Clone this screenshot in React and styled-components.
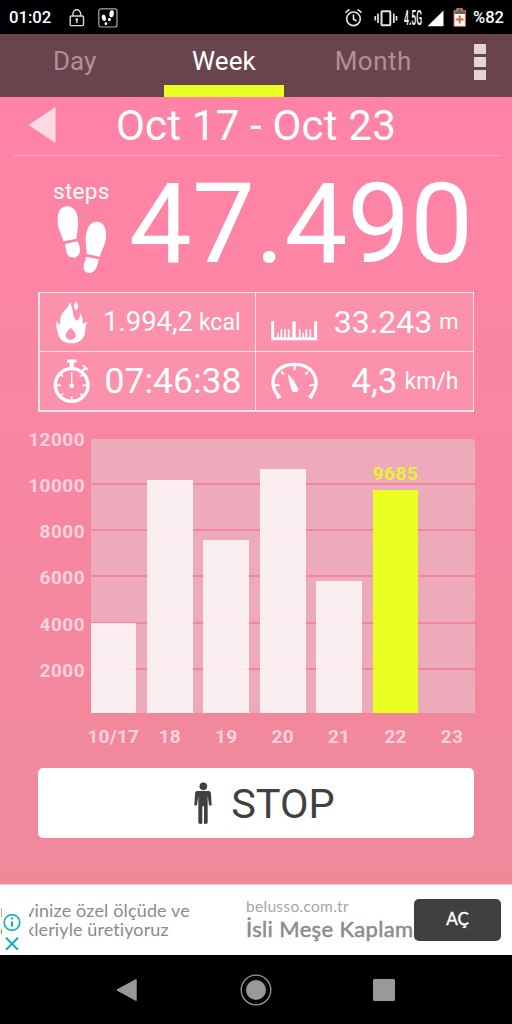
import React from 'react';
import styled, { createGlobalStyle } from 'styled-components';

const GlobalStyle = createGlobalStyle`
  html,
  body {
    margin: 0;
    padding: 0;
  }
  svg {
    display: block;
    flex-shrink: 0;
  }
`;

const Screen = styled.div`
  width: 512px;
  height: 1024px;
  overflow: hidden;
  display: flex;
  flex-direction: column;
  font-family: Roboto, sans-serif;
  color: #fff;
  white-space: nowrap;
`;

const Text = styled.span`
  font-size: ${(p) => p.$size}px;
  font-weight: ${(p) => p.$weight || 400};
  letter-spacing: ${(p) => p.$spacing || 0}px;
  line-height: 1;
`;

const StatusBar = styled.div`
  height: 34px;
  box-sizing: border-box;
  padding: 2px 8px 0 9px;
  background: #000;
  display: flex;
  align-items: center;
  justify-content: space-between;
`;

const StatusGroup = styled.div`
  display: flex;
  align-items: center;
`;

const NoticeIcons = styled.div`
  display: flex;
  align-items: center;
  gap: 13px;
`;

const Clock = styled(Text)`
  width: 60px;
`;

const TabBar = styled.div`
  height: 63px;
  background: #6a444c;
  display: flex;
`;

const Tab = styled.div`
  width: 149.3px;
  box-sizing: border-box;
  padding: 0 15px;
  text-align: center;
  color: ${(p) => (p.$active ? '#fff' : '#ab9298')};
  font-size: 26px;
  line-height: 55px;
  letter-spacing: ${(p) => p.$spacing || 0}px;
`;

const TabMarker = styled.div`
  height: 12px;
  margin-top: -4px;
  background: #e8ff21;
`;

const MenuButton = styled.div`
  flex: 1;
  padding-top: 10px;
  display: flex;
  flex-direction: column;
  align-items: center;
  gap: 3px;
`;

const MenuDot = styled.div`
  width: 11.5px;
  height: 10px;
  background: #e1d5d8;
`;

const Content = styled.div`
  height: 788px;
  box-sizing: border-box;
  background: linear-gradient(#ff83a7, #ef899a);
`;

const DateRow = styled.div`
  height: 59px;
  box-sizing: border-box;
  margin: 0 12px 0 13px;
  padding-left: 15px;
  border-bottom: 1px solid #ffabc4;
  display: flex;
  align-items: center;

  svg {
    margin-bottom: 2px;
  }
`;

const DateText = styled(Text)`
  margin-left: 60px;
`;

const Hero = styled.div`
  height: 136px;
  display: flex;
  align-items: center;
  padding-left: 53px;
`;

const StepsLabel = styled.div`
  width: 76px;
  height: 90px;
  padding-top: 3px;
  display: flex;
  flex-direction: column;
  gap: 2px;

  svg {
    margin-left: 3px;
  }
`;

const Stats = styled.div`
  width: 436px;
  height: 120px;
  box-sizing: border-box;
  margin-left: 38px;
  padding: 1.5px;
  background: #ffe4ea;
  display: grid;
  grid-template-columns: 215px 1fr;
  grid-template-rows: 57.5px 1fr;
  gap: 1.5px;
`;

const Stat = styled.div`
  background: #fc91ac;
  padding: ${(p) => p.$padding};
  display: flex;
  align-items: center;
  justify-content: space-between;
`;

const Amount = styled.div`
  display: flex;
  align-items: center;
  gap: ${(p) => p.$gap || 7}px;
`;

const Chart = styled.div`
  margin-top: 5px;
  height: 351px;
  display: grid;
  grid-template-columns: 85px 384.5px;
  grid-template-rows: 297px 54px;
  column-gap: 5.5px;
`;

const ScaleLabels = styled.div`
  text-align: right;
  font-size: 19px;
  font-weight: 700;
  letter-spacing: 0.45px;
  line-height: 46.15px;
  color: #ffd2dd;
`;

const Plot = styled.div`
  margin-top: 22px;
  height: 274.5px;
  display: grid;
  border-radius: 3px 3px 0 0;
  overflow: hidden;
`;

const GridLines = styled.div`
  grid-area: 1 / 1;
`;

const GridBand = styled.div`
  height: 46.15px;
  box-sizing: border-box;
  background: #edaaba;
  border-bottom: 2px solid #f5849f;
`;

const Bars = styled.div`
  grid-area: 1 / 1;
  height: 274.5px;
  display: grid;
  grid-template-columns: repeat(7, 45.7px);
  column-gap: 10.75px;
  align-items: end;
`;

const Bar = styled.div`
  background: ${(p) => (p.$active ? '#e8ff21' : 'rgba(252, 241, 242, 0.95)')};
`;

const BarValue = styled.div`
  text-align: center;
  font-size: 19px;
  font-weight: 700;
  letter-spacing: 0.5px;
  line-height: 33px;
  color: #e9f32f;
`;

const DayLabels = styled.div`
  grid-column: 2;
  display: grid;
  grid-template-columns: repeat(7, 45.7px);
  column-gap: 10.75px;
  font-size: 19px;
  font-weight: 700;
  letter-spacing: 0.2px;
  line-height: 45px;
  color: #ffd2dd;
`;

const DayLabel = styled.div`
  display: flex;
  justify-content: center;
`;

const StopButton = styled.div`
  width: 436px;
  height: 70px;
  margin: 0 0 0 38px;
  border-radius: 5px;
  background: #fff;
  color: #404040;
  display: flex;
  align-items: center;
  justify-content: center;
  gap: 19px;
  box-sizing: border-box;
  padding: 2px 0 0 17px;
`;

const Ad = styled.div`
  height: 71px;
  box-sizing: border-box;
  border-top: 1px solid #ddd3d5;
  background: #fff;
  font-family: Lato, sans-serif;
  color: #8b8b8b;
  display: flex;
`;

const AdEdge = styled.div`
  width: 2px;
  overflow: hidden;
  padding-top: 16px;
  font-size: 18px;
  line-height: 19px;
`;

const AdControls = styled.div`
  width: 27px;
  padding-top: 28px;
  box-sizing: border-box;
`;

const AdText = styled.div`
  width: 217px;
  overflow: hidden;
  padding-top: 16px;
  font-size: 18px;
  line-height: 19px;
`;

const AdLine = styled.div`
  margin-left: -4px;
  letter-spacing: ${(p) => p.$spacing}px;
`;

const AdOffer = styled.div`
  width: 168px;
  padding-top: 12px;
  overflow: hidden;
`;

const AdDomain = styled.div`
  font-size: 15.5px;
  line-height: 18px;
  letter-spacing: 0.3px;
  color: #a5a5a5;
`;

const AdTitle = styled.div`
  font-size: 22px;
  font-weight: 400;
  letter-spacing: 0.35px;
  line-height: 28px;
  -webkit-text-stroke: 0.5px #8b8b8b;
`;

const AdAction = styled.div`
  width: 87px;
  height: 42px;
  margin-top: 14px;
  border-radius: 5px;
  background: #404040;
  color: #fff;
  font-size: 17px;
  font-weight: 400;
  -webkit-text-stroke: 0.4px #fff;
  line-height: 40px;
  text-align: center;
`;

const NavBar = styled.div`
  height: 69px;
  background: #000;
  display: grid;
  grid-template-columns: repeat(3, 128px);
  justify-content: center;
  align-items: center;
  justify-items: center;
`;

const LockIcon = () => (
  <svg width="16" height="18" viewBox="0 0 16 18" fill="none" stroke="#d8d8d8" strokeWidth="1.4">
    <rect x="1.2" y="7" width="13.3" height="9.6" rx="1" />
    <path d="M4 7V4.6a3.8 3.8 0 0 1 7.6 0V7M7.8 10.4v3.6" />
    <circle cx="7.8" cy="10.6" r=".7" />
  </svg>
);

const StepsAppIcon = () => (
  <svg width="20" height="20" viewBox="0 0 20 20">
    <rect x=".8" y=".8" width="18.2" height="18.2" rx="2" fill="none" stroke="#aaa" strokeWidth="1.2" />
    <g fill="#fff">
      <ellipse cx="5.8" cy="9.8" rx="2" ry="3.2" transform="rotate(-10 5.8 9.8)" />
      <ellipse cx="7.9" cy="15.6" rx="1.4" ry="1.7" />
      <ellipse cx="13.6" cy="5.8" rx="2.2" ry="3.5" transform="rotate(8 13.6 5.8)" />
      <ellipse cx="11.4" cy="11.5" rx="1.5" ry="1.8" />
    </g>
  </svg>
);

const StatusIcons = () => (
  <svg width="129" height="22" viewBox="0 0 129 22">
    <g fill="none" stroke="#e4e4e4" strokeWidth="1.6">
      <circle cx="9.5" cy="11.8" r="6.8" />
      <path d="M9.5 7.5v4.7l3 1.8M1.5 5.6l3.8-3.2M17.5 5.6l-3.8-3.2" />
      <rect x="37.5" y="4.3" width="8.8" height="14" rx=".8" strokeWidth="2" />
      <path d="M34 6.5v9.5M49.8 6.5v9.5M31.3 9v4.6M52.5 9v4.6" strokeWidth="1.7" />
    </g>
    <text
      x="60"
      y="18.3"
      fill="#fff"
      fontFamily="Roboto, sans-serif"
      fontSize="20"
      fontWeight="500"
      textLength="18"
      lengthAdjust="spacingAndGlyphs"
    >
      4.5G
    </text>
    <path d="M99.5 3.4v15.8H83.5z" fill="#fff" />
    <path d="M110 3.6h2.8V1.5h5.4v2.1h3.2v15.7H110z" fill="#fff" stroke="#e0623c" />
    <path d="M110.5 4h3V2h4v2h3.5v3h-10.5z" fill="#626262" />
    <path d="M115.7 8.5v8M111.7 12.5h8" stroke="#e0623c" strokeWidth="2" />
  </svg>
);

const FootprintsIcon = () => (
  <svg width="52" height="70" viewBox="168 330 156 210" fill="#fff">
    <path d="M198 334c24-3 36 20 36 46 1 20-5 36-4 51l-40 8c-3-19-17-34-17-62 0-25 7-41 25-43z" />
    <path d="M195 447l38-8c8 18 11 38-3 46-12 6-27 2-30-12z" />
    <path d="M290 380c22 0 29 21 28 45-1 27-15 41-18 60l-40-8c1-16-4-29-3-47 1-28 13-50 33-50z" />
    <path d="M258 485l38 8c-3 18-8 36-22 40-13 3-24-4-23-18 0-12 6-16 7-30z" />
  </svg>
);

const FlameIcon = () => (
  <svg width="32" height="44" viewBox="78 47 96 132">
    <path
      d="M120 54c-4 15-20 26-27 41-5 12-1 19-3 27-5-3-7-8-8-14-6 12-2 24 1 36 4 21 18 33 39 33 23 0 40-11 43-32 2-12-1-21 8-31-6 0-11 2-15 6 2-14-2-25-8-34 0 12-2 20-9 23-8-3-10-13-12-22-1-12-4-21-9-33zM137 49c0 8-7 12-5 20 1 5 6 6 7 10 8-11 5-22-2-30z"
      fill="#fff"
    />
    <path d="M122 130c8 8 17 15 15 26-3 13-24 14-29 2-5-9 5-17 14-28z" fill="#fc91ac" />
  </svg>
);

const StopwatchIcon = () => (
  <svg width="37" height="44" viewBox="67 223 111 132" fill="none" stroke="#fff">
    <circle cx="123" cy="301" r="49" strokeWidth="10" />
    <path d="M109 229h28" strokeWidth="9" />
    <path d="M123 228v22" strokeWidth="13" />
    <path d="M156 259l9-10" strokeWidth="7" />
    <path d="M157 242l14 13" strokeWidth="6" />
    <path d="M123 262v40" strokeWidth="4" />
    <path
      d="M77 302h14M155 302h14M123 334v14M91 270l6 6M155 270l-6 6M91 333l6-6M155 333l-6-6"
      strokeWidth="5"
    />
    <circle cx="123" cy="303" r="7" fill="#fff" stroke="none" />
  </svg>
);

const RulerIcon = () => (
  <svg width="47" height="38" viewBox="64 56 141 114" fill="none" stroke="#fff">
    <path d="M69 111v52h129v-52" strokeWidth="9" />
    <path d="M133 111v52" strokeWidth="10" />
    <path d="M85 145v20M95 135v30M106 135v30M117 135v30M150 135v30M160 145v20M170 135v30M182 135v30" strokeWidth="5" />
  </svg>
);

const GaugeIcon = () => (
  <svg width="48" height="38" viewBox="63 232 144 114" fill="none" stroke="#fff">
    <path d="M87 336C48 290 77 239 134 239s84 54 47 97" strokeWidth="10" />
    <path d="M92 334l-11 6M176 334l11 6" strokeWidth="8" />
    <path d="M73 302h16M177 302h18M134 242v15M94 261l8 9M174 261l-8 9" strokeWidth="6" />
    <path d="M114 269c15 14 23 28 31 44 3 9-15 14-20 4-5-16-10-32-11-48z" fill="#fff" stroke="none" />
  </svg>
);

const PersonIcon = () => (
  <svg width="18" height="43" viewBox="134 79 54 129" fill="#404040">
    <circle cx="162" cy="92" r="11.5" />
    <path d="M144 106h34q7 0 7 9l2 33q-5 4-8 0l-4-27v80q-4 7-11 2v-51h-5v51q-7 5-12-2v-80l-4 27q-4 4-8 0l2-33q0-9 7-9z" />
  </svg>
);

const days = [
  { label: '10/17', height: 90 },
  { label: '18', height: 233 },
  { label: '19', height: 173 },
  { label: '20', height: 244.5 },
  { label: '21', height: 132 },
  { label: '22', height: 223.5, value: 9685 },
  { label: '23', height: 0 },
];

const scale = [12000, 10000, 8000, 6000, 4000, 2000];

function WeekChart() {
  return (
    <Chart>
      <ScaleLabels>
        {scale.map((n) => (
          <div key={n}>{n}</div>
        ))}
      </ScaleLabels>
      <Plot>
        <GridLines>
          {scale.map((n) => (
            <GridBand key={n} />
          ))}
        </GridLines>
        <Bars>
          {days.map((day) => (
            <div key={day.label}>
              {day.value && <BarValue>{day.value}</BarValue>}
              <Bar $active={!!day.value} style={{ height: day.height }} />
            </div>
          ))}
        </Bars>
      </Plot>
      <DayLabels>
        {days.map((day) => (
          <DayLabel key={day.label}>{day.label}</DayLabel>
        ))}
      </DayLabels>
    </Chart>
  );
}

export default function App() {
  return (
    <Screen>
      <GlobalStyle />
      <StatusBar>
        <StatusGroup>
          <Clock $size={16.7} $weight={500}>
            01:02
          </Clock>
          <NoticeIcons>
            <LockIcon />
            <StepsAppIcon />
          </NoticeIcons>
        </StatusGroup>
        <StatusGroup>
          <StatusIcons />
          <Text $size={16.5} $weight={500}>
            %82
          </Text>
        </StatusGroup>
      </StatusBar>

      <TabBar>
        <Tab>Day</Tab>
        <Tab $active $spacing={0.15}>
          Week
          <TabMarker />
        </Tab>
        <Tab $spacing={0.5}>Month</Tab>
        <MenuButton>
          <MenuDot />
          <MenuDot />
          <MenuDot />
        </MenuButton>
      </TabBar>

      <Content>
        <DateRow>
          <svg width="28" height="36" viewBox="0 0 28 36">
            <path d="M.5 18L27.5 0v36z" fill="#ffd9e3" />
          </svg>
          <DateText $size={42} $spacing={0.2}>
            Oct 17 - Oct 23
          </DateText>
        </DateRow>

        <Hero>
          <StepsLabel>
            <Text $size={22.5} $spacing={0.3}>
              steps
            </Text>
            <FootprintsIcon />
          </StepsLabel>
          <Text $size={112}>47.490</Text>
        </Hero>

        <Stats>
          <Stat $padding="0 14px 0 16px">
            <FlameIcon />
            <Amount $gap={6}>
              <Text $size={27.5}>1.994,2</Text>
              <Text $size={23}>kcal</Text>
            </Amount>
          </Stat>
          <Stat $padding="0 14px 0 15px">
            <RulerIcon />
            <Amount>
              <Text $size={32}>33.243</Text>
              <Text $size={22}>m</Text>
            </Amount>
          </Stat>
          <Stat $padding="0 13px 0 13px">
            <StopwatchIcon />
            <Text $size={35.5}>07:46:38</Text>
          </Stat>
          <Stat $padding="0 14px 0 15px">
            <GaugeIcon />
            <Amount>
              <Text $size={35}>4,3</Text>
              <Text $size={23}>km/h</Text>
            </Amount>
          </Stat>
        </Stats>

        <WeekChart />

        <StopButton>
          <PersonIcon />
          <Text $size={41.5}>STOP</Text>
        </StopButton>
      </Content>

      <Ad>
        <AdEdge>
          n
          <br />e
        </AdEdge>
        <AdControls>
          <svg width="20" height="38" viewBox="0 0 20 38" fill="none" stroke="#12aec2" strokeWidth="1.7">
            <circle cx="10" cy="9.5" r="7.8" />
            <path d="M10 8.4v5.4M10 4.6v2" strokeWidth="2.2" />
            <path d="M4 24.8l12 12M16 24.8l-12 12" strokeWidth="2" />
          </svg>
        </AdControls>
        <AdText>
          <AdLine $spacing={0.15}>vinize özel ölçüde ve</AdLine>
          <AdLine $spacing={0.1}>kleriyle üretiyoruz</AdLine>
        </AdText>
        <AdOffer>
          <AdDomain>belusso.com.tr</AdDomain>
          <AdTitle>İsli Meşe Kaplam</AdTitle>
        </AdOffer>
        <AdAction>AÇ</AdAction>
      </Ad>

      <NavBar>
        <svg width="22" height="24" viewBox="0 0 22 24">
          <path d="M.5 12L19 1.8v20.4z" fill="#999" stroke="#999" strokeWidth="1.5" strokeLinejoin="round" />
        </svg>
        <svg width="32" height="32" viewBox="0 0 32 32">
          <circle cx="16" cy="16" r="14.8" fill="none" stroke="#999" strokeWidth="1.3" />
          <circle cx="16" cy="16" r="10" fill="#999" />
        </svg>
        <svg width="22" height="22" viewBox="0 0 22 22">
          <rect width="22" height="22" rx="1.5" fill="#999" />
        </svg>
      </NavBar>
    </Screen>
  );
}
